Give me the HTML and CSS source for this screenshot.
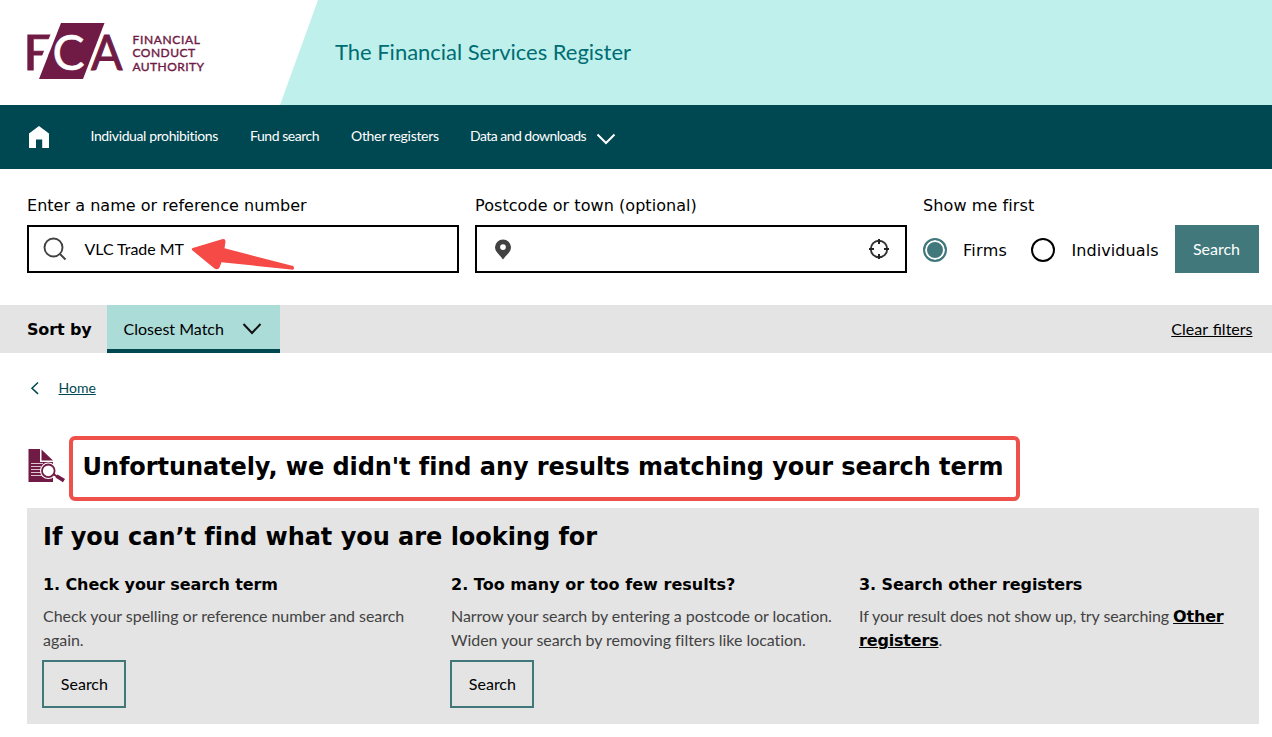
FILE: index.html
```html
<!DOCTYPE html>
<html lang="en">
<head>
<meta charset="utf-8">
<title>The Financial Services Register</title>
<link rel="stylesheet" href="styles.css">
</head>
<body>
<header class="masthead">
  <div class="brand">
    <svg class="logo" width="190" height="64" viewBox="24 20 190 64">
      <text class="logo-letter heavy" transform="translate(23 69.800) scale(1.120 1)">F</text>
      <path d="M55 23H61L39 79H33Z" fill="#fff"/>
      <path d="M61 23H104.500L83 79H39Z" fill="#701b45"/>
      <text class="logo-letter light" x="52.500" y="69.600">C</text>
      <text class="logo-letter heavy" transform="translate(91 69.800) scale(.970 1)">A</text>
      <g class="logo-name">
        <text x="132.500" y="43.500" textLength="67.500">FINANCIAL</text>
        <text x="132.500" y="57" textLength="62.500">CONDUCT</text>
        <text x="132.500" y="70.500" textLength="71.500">AUTHORITY</text>
      </g>
    </svg>
  </div>
  <div class="site-name">The Financial Services Register</div>
</header>
<nav class="nav">
  <a class="nav-home"><svg width="22" height="24" viewBox="0 0 22 24"><path d="M11 1L21 8.500V23H14.200V14.500H8V23H1V8.500Z" fill="#fff"/></svg></a>
  <a class="nav-a">Individual prohibitions</a>
  <a class="nav-b">Fund search</a>
  <a class="nav-c">Other registers</a>
  <a class="nav-d">Data and downloads</a>
  <svg class="nav-chevron" width="20" height="14" viewBox="0 0 20 14"><path d="M1.500 2.500L10 11L18.500 2.500" fill="none" stroke="#fff" stroke-width="2"/></svg>
</nav>
<form class="search">
  <div class="field">
    <label>Enter a name or reference number</label>
    <div class="input">
      <svg width="24" height="24" viewBox="0 0 24 24" fill="none" stroke="#424242" stroke-width="1.900"><circle cx="10.500" cy="10.500" r="9"/><path d="M16.500 16.500L22.500 22.500"/></svg>
      <span class="query">VLC Trade MT</span>
      <svg class="arrow" width="104" height="34" viewBox="0 0 104 34"><path d="M1.300 12.300Q0 11 1.800 10L31 1.200Q34.500 .500 34.500 3.500L33.500 10.300L102 28Q103.500 29 102.800 31Q102 32 100 31.500L30.500 24.300L28.500 29.500Q27 32.500 23.500 30.500Z" fill="#f54a45"/></svg>
    </div>
  </div>
  <div class="field">
    <label class="label-place">Postcode or town (optional)</label>
    <div class="input place">
      <svg width="16" height="21" viewBox="0 0 16 21"><path fill-rule="evenodd" d="M8 .500A8 8 0 0 0 0 8.300C0 13 4.500 15.500 8 20.500C11.500 15.500 16 13 16 8.300A8 8 0 0 0 8 .500ZM8 5.200a2.900 2.900 0 1 1 0 5.800a2.900 2.900 0 1 1 0-5.800Z" fill="#424242"/></svg>
      <svg width="20" height="20" viewBox="0 0 20 20" fill="none" stroke="#333"><circle cx="10" cy="10" r="8.200" stroke-width="1.900"/><path d="M10 0V5M10 15V20M0 10H5M15 10H20" stroke="#222" stroke-width="2"/></svg>
    </div>
  </div>
  <div class="first">
    <label class="label-first">Show me first</label>
    <div class="choices">
      <span class="radio on"></span><span class="firms">Firms</span>
      <span class="radio"></span><span class="people">Individuals</span>
    </div>
  </div>
  <div class="submit">Search</div>
</form>
<div class="sort">
  <strong class="sort-label">Sort by</strong>
  <div class="sort-pick"><span>Closest Match</span><svg width="20" height="14" viewBox="0 0 20 14"><path d="M1.500 2L10 11L18.500 2" fill="none" stroke="#111" stroke-width="2"/></svg></div>
  <a class="clear">Clear filters</a>
</div>
<div class="crumbs">
  <svg width="10" height="14" viewBox="0 0 10 14"><path d="M8 1.500L2 7.200L8 12.900" fill="none" stroke="#004851" stroke-width="1.500"/></svg>
  <a>Home</a>
</div>
<div class="result">
  <svg width="38" height="36" viewBox="0 0 38 36">
    <path d="M.500 1H12V14H25V34H.500Z" fill="#701b45"/><path d="M13.500 1.500V12.500H25Z" fill="#701b45"/>
    <path d="M3 15.500H15M3 18.500H13M3 21.500H13M3 24.500H13M3 27.500H15" stroke="#dcc3cf" stroke-width="1"/>
    <path d="M26.500 27L35.500 32.500" stroke="#fff" stroke-width="6"/>
    <circle cx="20.300" cy="22.800" r="8.300" fill="#fff"/><circle cx="20.300" cy="22.800" r="6.300" fill="#fff" stroke="#701b45" stroke-width="1.800"/>
    <path d="M25.500 26.200L29 28.500" stroke="#701b45" stroke-width="2"/><path d="M28.500 28L36 32.700" stroke="#701b45" stroke-width="3.800"/>
  </svg>
  <h1>Unfortunately, we didn't find any results matching your search term</h1>
</div>
<section class="help">
  <h2>If you can’t find what you are looking for</h2>
  <div class="cols">
    <div class="col">
      <h3 class="h-check">1. Check your search term</h3>
      <p class="p-check">Check your spelling or reference number and search<br>again.</p>
      <div class="button">Search</div>
    </div>
    <div class="col">
      <h3 class="h-many">2. Too many or too few results?</h3>
      <p>Narrow your search by entering a postcode or location.<br>Widen your search by removing filters like location.</p>
      <div class="button">Search</div>
    </div>
    <div class="col">
      <h3 class="h-other">3. Search other registers</h3>
      <p class="p-other">If your result does not show up, try searching <a>Other</a><br><a>registers</a>.</p>
    </div>
  </div>
</section>
</body>
</html>
```
FILE: styles.css
```css
* { box-sizing: border-box; }
body { margin: 0; width: 1272px; height: 737px; overflow: hidden; background: #fff; color: #000; font: 16px/24px Lato, sans-serif; white-space: nowrap; }
svg { display: block; flex: none; }
h1, h2, h3, p { margin: 0; }

.masthead { display: flex; height: 105px; background: #bff0ec; }
.brand { width: 318px; height: 105px; padding: 20px 0 0 24px; background: #fff; clip-path: polygon(0 0, 100% 0, 280px 100%, 0 100%); }
.logo-letter { font: 400 48px Lato, sans-serif; }
.heavy { fill: #701b45; stroke: #701b45; stroke-width: 1px; }
.light { fill: #fff; stroke: #fff; stroke-width: .6px; }
.logo-name { font: 400 12px Lato, sans-serif; fill: #701b45; stroke: #701b45; stroke-width: .4px; }
.site-name { padding: 36px 0 0 17px; color: #006d73; font-size: 22px; line-height: 32px; letter-spacing: -.02px; }

.nav { display: flex; align-items: center; height: 64px; padding: 0 0 2px 28px; background: #004851; color: #fff; font-size: 14px; letter-spacing: -.38px; }
.nav-home { width: 62.500px; padding-top: 2px; }
.nav-a { width: 159.500px; }
.nav-b { width: 101px; letter-spacing: -.45px; }
.nav-c { width: 119px; letter-spacing: -.3px; }
.nav-d { width: 126px; letter-spacing: -.53px; }
.nav-chevron { margin-top: 6px; }

.search { display: flex; height: 136px; padding: 24px 13px 0 27px; gap: 16px; }
.field { width: 432px; }
label { display: block; height: 32px; padding-top: 1px; font: 16px/24px "DejaVu Sans", sans-serif; letter-spacing: .03px; }
.input { position: relative; display: flex; align-items: center; height: 48px; padding: 0 15px 0 14px; border: 2px solid #000; }
.query { margin-left: 17.500px; letter-spacing: -.05px; }
.arrow { position: absolute; left: 162px; top: 11px; }
.place { justify-content: space-between; padding-left: 18px; padding-right: 16px; }
.label-place { letter-spacing: .06px; }
.label-first { letter-spacing: .1px; }
.first { width: 236px; }
.choices { display: flex; align-items: center; height: 50px; font-family: "DejaVu Sans", sans-serif; }
.radio { width: 24px; height: 24px; border: 2px solid #000; border-radius: 50%; }
.radio.on { border-color: #40787c; background: #40787c; box-shadow: inset 0 0 0 2px #fff; }
.firms { width: 68px; margin-left: 16px; padding-top: 1px; letter-spacing: .3px; }
.people { margin-left: 16.500px; padding-top: 1px; letter-spacing: .08px; }
.submit { width: 84px; height: 48px; margin: 32px 0 0; padding-right: 1px; background: #40787c; color: #fff; line-height: 48px; text-align: center; }

.sort { display: flex; height: 48px; padding: 0 19.500px 0 27px; background: #e4e4e4; }
.sort-label { width: 80px; padding-top: 1px; font: bold 16px/48px "DejaVu Sans", sans-serif; letter-spacing: -.15px; }
.sort-pick { display: flex; align-items: center; justify-content: space-between; width: 173px; padding: 4px 18px 0 16.500px; border-bottom: 4px solid #004851; background: #abdcd8; }
.clear { margin-left: auto; line-height: 48px; word-spacing: 1px; text-decoration: underline; }

.crumbs { display: flex; align-items: center; gap: 18.500px; height: 70px; padding: 0 0 0 30px; color: #004851; font-size: 14px; }
.crumbs a { text-decoration: underline; }

.result { display: flex; height: 85px; padding-left: 28px; }
.result svg { margin-top: 25px; }
h1 { height: 65px; margin: 13px 0 0 3px; padding: 0 13px 0 9.500px; width: 951px; border: 4px solid #ee504a; border-radius: 6px; font: bold 24px/55px "DejaVu Sans", sans-serif; letter-spacing: -.07px; }

.help { height: 216px; margin: 0 13px 0 27px; padding: 12px 16px; background: #e4e4e4; }
h2 { height: 32px; padding-top: 1px; font: bold 24px/32px "DejaVu Sans", sans-serif; letter-spacing: -.03px; }
.cols { display: grid; grid-template-columns: repeat(3, 408px); padding-top: 20px; }
h3 { height: 32px; padding-top: 1px; font: bold 16px/24px "DejaVu Sans", sans-serif; letter-spacing: -.1px; }
.h-many { letter-spacing: .03px; }
.col p { height: 56px; color: #424242; letter-spacing: -.05px; }
.col .p-check { letter-spacing: -.03px; }
.col .p-other { letter-spacing: -.09px; }
.col a { color: #000; font: bold 16px/20px "DejaVu Sans", sans-serif; letter-spacing: -.18px; text-decoration: underline; }
.button { width: 84px; height: 48px; margin-left: -.6px; border: 2px solid #40787c; line-height: 44px; text-align: center; }
```
